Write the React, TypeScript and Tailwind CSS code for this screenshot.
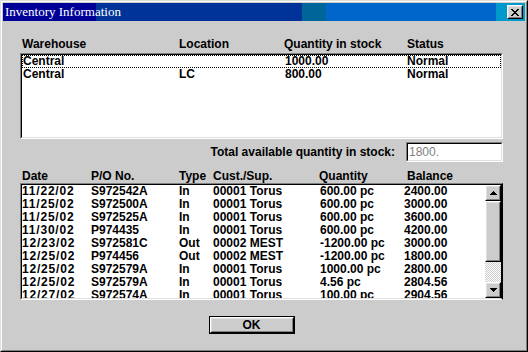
import React from "react";

const topRows = [
  ["Central", "", "1000.00", "Normal"],
  ["Central", "LC", "800.00", "Normal"],
];

const rows = [
  ["11/22/02", "S972542A", "In", "00001 Torus", "600.00 pc", "2400.00"],
  ["11/25/02", "S972500A", "In", "00001 Torus", "600.00 pc", "3000.00"],
  ["11/25/02", "S972525A", "In", "00001 Torus", "600.00 pc", "3600.00"],
  ["11/30/02", "P974435", "In", "00001 Torus", "600.00 pc", "4200.00"],
  ["12/23/02", "S972581C", "Out", "00002 MEST", "-1200.00 pc", "3000.00"],
  ["12/25/02", "P974456", "Out", "00002 MEST", "-1200.00 pc", "1800.00"],
  ["12/25/02", "S972579A", "In", "00001 Torus", "1000.00 pc", "2800.00"],
  ["12/25/02", "S972579A", "In", "00001 Torus", "4.56 pc", "2804.56"],
  ["12/27/02", "S972574A", "In", "00001 Torus", "100.00 pc", "2904.56"],
];

function Raised({ className = "", children }: { className?: string; children?: React.ReactNode }) {
  return (
    <div className={"border border-t-[#ffffff] border-l-[#ffffff] border-b-[#000000] border-r-[#000000] " + className}>
      <div className="w-full h-full border border-t-[#dfdfdf] border-l-[#dfdfdf] border-b-[#808080] border-r-[#808080] bg-[#cccccc] flex items-center justify-center">
        {children}
      </div>
    </div>
  );
}

export default function App() {
  return (
    <div className="w-[528px] h-[352px] border border-t-[#dfdfdf] border-l-[#dfdfdf] border-b-[#000000] border-r-[#000000] font-['Liberation_Sans',Arial,sans-serif] text-black">
      <div className="w-full h-full border border-t-[#ffffff] border-l-[#ffffff] border-b-[#808080] border-r-[#808080] bg-[#cccccc] p-px flex flex-col">
        {/* Title bar */}
        <div className="h-[18px] flex items-center justify-between pl-[2px] pr-[2px] bg-[linear-gradient(90deg,#000099_0px,#000099_93px,#003399_93px,#003399_299px,#006699_299px,#006699_323px,#0066cc_323px,#0066cc_493px,#0099cc_493px,#0099cc_100%)]">
          <span className="font-['Liberation_Serif',serif] text-[13px] leading-[18px] text-white">Inventory Information</span>
          <Raised className="w-[16px] h-[14px]">
            <svg width="8" height="7" viewBox="0 0 8 7">
              <path d="M0 0h2v1h-2zM6 0h2v1h-2zM1 1h2v1h-2zM5 1h2v1h-2zM2 2h4v1h-4zM3 3h2v1h-2zM2 4h4v1h-4zM1 5h2v1h-2zM5 5h2v1h-2zM0 6h2v1h-2zM6 6h2v1h-2z" fill="#000" />
            </svg>
          </Raised>
        </div>

        {/* Content */}
        <div className="flex-1 flex flex-col pl-[17px] text-[12px] font-bold">
          {/* top header */}
          <div className="mt-[17px] h-[13px] leading-[13px] flex pl-[2px]">
            <div className="w-[157px]">Warehouse</div>
            <div className="w-[105px]">Location</div>
            <div className="w-[123px]">Quantity in stock</div>
            <div>Status</div>
          </div>
          {/* top list */}
          <div className="mt-[2px] w-[483px] h-[86px] border border-t-[#808080] border-l-[#808080] border-b-[#ffffff] border-r-[#ffffff]">
            <div className="w-full h-full border border-t-[#000000] border-l-[#000000] border-b-[#dfdfdf] border-r-[#dfdfdf] bg-white">
              {topRows.map((r, i) => (
                <div
                  key={i}
                  className={
                    "h-[13px] leading-[13px] flex " +
                    (i === 0 ? "outline-1 outline-dotted outline-black -outline-offset-1" : "")
                  }
                >
                  <div className="w-[157px] pl-[1px]">{r[0]}</div>
                  <div className="w-[106px]">{r[1]}</div>
                  <div className="w-[122px]">{r[2]}</div>
                  <div>{r[3]}</div>
                </div>
              ))}
            </div>
          </div>

          {/* total row */}
          <div className="mt-[3px] w-[483px] h-[20px] flex items-center justify-end">
            <span className="mr-[11px]">Total available quantity in stock:</span>
            <div className="w-[97px] h-[20px] border border-t-[#808080] border-l-[#808080] border-b-[#ffffff] border-r-[#ffffff]">
              <div className="w-full h-full border border-t-[#000000] border-l-[#000000] border-b-[#dfdfdf] border-r-[#dfdfdf] bg-white pl-[1px] font-normal text-[#808080] leading-[16px]">
                1800.
              </div>
            </div>
          </div>

          {/* lower header */}
          <div className="mt-[8px] h-[13px] leading-[13px] flex pl-[2px]">
            <div className="w-[69px]">Date</div>
            <div className="w-[88px]">P/O No.</div>
            <div className="w-[34px]">Type</div>
            <div className="w-[106px]">Cust./Sup.</div>
            <div className="w-[88px]">Quantity</div>
            <div>Balance</div>
          </div>

          {/* lower list */}
          <div className="w-[483px] h-[117px] border border-t-[#808080] border-l-[#808080] border-b-[#ffffff] border-r-[#000000]">
            <div className="w-full h-full border border-t-[#000000] border-l-[#000000] border-b-[#dfdfdf] border-r-[#000000] bg-white flex overflow-hidden">
              <div className="flex-1 overflow-hidden">
                {rows.map((r, i) => (
                  <div key={i} className="h-[13px] leading-[13px] flex whitespace-nowrap">
                    <div className="w-[69px] tracking-[0.8px]">{r[0]}</div>
                    <div className="w-[88px]">{r[1]}</div>
                    <div className="w-[34px]">{r[2]}</div>
                    <div className="w-[107px]">{r[3]}</div>
                    <div className="w-[84px]">{r[4]}</div>
                    <div>{r[5]}</div>
                  </div>
                ))}
              </div>
              {/* scrollbar */}
              <div className="w-[16px] h-full flex flex-col">
                <Raised className="w-[16px] h-[16px]">
                  <svg width="7" height="4" viewBox="0 0 7 4">
                    <path d="M3 0h1v1h1v1h1v1h1v1h-7v-1h1v-1h1v-1h1z" fill="#000" />
                  </svg>
                </Raised>
                <Raised className="w-[16px] h-[61px]" />
                <div className="w-[16px] flex-1 bg-[repeating-conic-gradient(#cccccc_0_25%,#ffffff_0_50%)] bg-[length:2px_2px]" />
                <Raised className="w-[16px] h-[16px]">
                  <svg width="7" height="4" viewBox="0 0 7 4">
                    <path d="M0 0h7v1h-1v1h-1v1h-1v1h-1v-1h-1v-1h-1v-1h-1z" fill="#000" />
                  </svg>
                </Raised>
              </div>
            </div>
          </div>

          {/* OK button */}
          <div className="mt-[16px] w-[483px] flex justify-center pr-[20px]">
            <div className="w-[86px] h-[18px] border border-black">
              <Raised className="w-full h-full">
                <span className="leading-[13px]">OK</span>
              </Raised>
            </div>
          </div>
        </div>
      </div>
    </div>
  );
}
